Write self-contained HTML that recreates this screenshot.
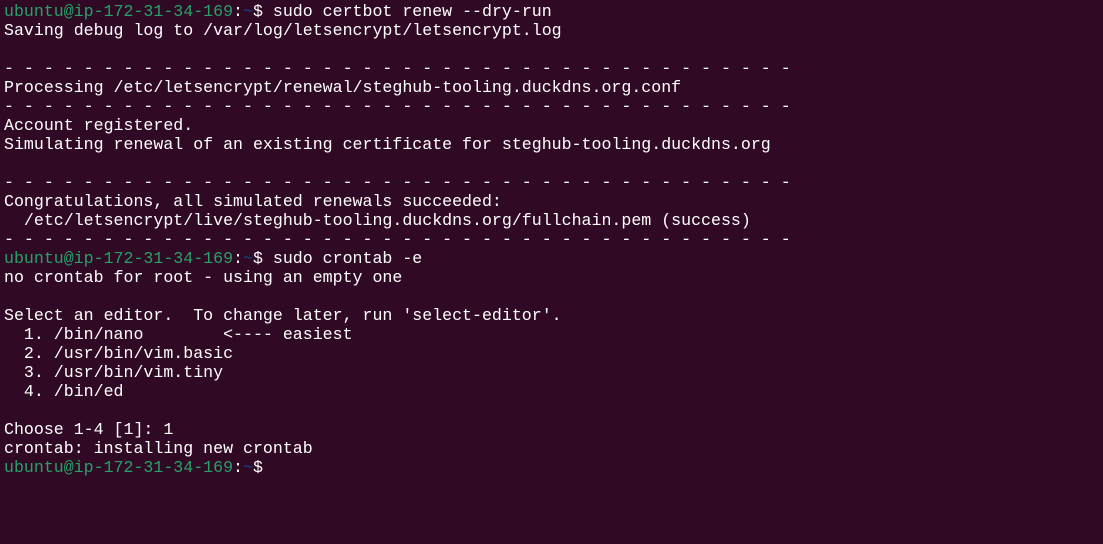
<!DOCTYPE html>
<html><head><meta charset="utf-8"><style>
html,body{margin:0;padding:0;background:#300a24;width:1103px;height:544px;overflow:hidden}
pre{margin:0;padding:2px 0 0 4px;font-family:"Liberation Mono",monospace;font-size:16.6px;line-height:19px;color:#ffffff;white-space:pre}
.g{color:#26a269}.b{color:#12488b}
</style></head><body><pre><span class="g">ubuntu@ip-172-31-34-169</span>:<span class="b">~</span>$ sudo certbot renew --dry-run
Saving debug log to /var/log/letsencrypt/letsencrypt.log

- - - - - - - - - - - - - - - - - - - - - - - - - - - - - - - - - - - - - - - -
Processing /etc/letsencrypt/renewal/steghub-tooling.duckdns.org.conf
- - - - - - - - - - - - - - - - - - - - - - - - - - - - - - - - - - - - - - - -
Account registered.
Simulating renewal of an existing certificate for steghub-tooling.duckdns.org

- - - - - - - - - - - - - - - - - - - - - - - - - - - - - - - - - - - - - - - -
Congratulations, all simulated renewals succeeded:
  /etc/letsencrypt/live/steghub-tooling.duckdns.org/fullchain.pem (success)
- - - - - - - - - - - - - - - - - - - - - - - - - - - - - - - - - - - - - - - -
<span class="g">ubuntu@ip-172-31-34-169</span>:<span class="b">~</span>$ sudo crontab -e
no crontab for root - using an empty one

Select an editor.  To change later, run 'select-editor'.
  1. /bin/nano        &lt;---- easiest
  2. /usr/bin/vim.basic
  3. /usr/bin/vim.tiny
  4. /bin/ed

Choose 1-4 [1]: 1
crontab: installing new crontab
<span class="g">ubuntu@ip-172-31-34-169</span>:<span class="b">~</span>$ </pre></body></html>
